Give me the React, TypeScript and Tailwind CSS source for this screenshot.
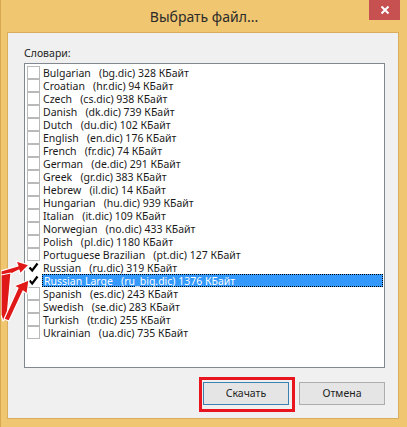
import React from "react";

const items: { name: string; file: string; size: string; checked?: boolean; selected?: boolean }[] = [
  { name: "Bulgarian", file: "bg.dic", size: "328" },
  { name: "Croatian", file: "hr.dic", size: "94" },
  { name: "Czech", file: "cs.dic", size: "938" },
  { name: "Danish", file: "dk.dic", size: "739" },
  { name: "Dutch", file: "du.dic", size: "102" },
  { name: "English", file: "en.dic", size: "176" },
  { name: "French", file: "fr.dic", size: "74" },
  { name: "German", file: "de.dic", size: "291" },
  { name: "Greek", file: "gr.dic", size: "383" },
  { name: "Hebrew", file: "il.dic", size: "14" },
  { name: "Hungarian", file: "hu.dic", size: "939" },
  { name: "Italian", file: "it.dic", size: "109" },
  { name: "Norwegian", file: "no.dic", size: "433" },
  { name: "Polish", file: "pl.dic", size: "1180" },
  { name: "Portuguese Brazilian", file: "pt.dic", size: "127" },
  { name: "Russian", file: "ru.dic", size: "319", checked: true },
  { name: "Russian Large", file: "ru_big.dic", size: "1376", checked: true, selected: true },
  { name: "Spanish", file: "es.dic", size: "243" },
  { name: "Swedish", file: "se.dic", size: "283" },
  { name: "Turkish", file: "tr.dic", size: "255" },
  { name: "Ukrainian", file: "ua.dic", size: "735" },
];

function Check({ checked }: { checked?: boolean }) {
  return (
    <div
      className={`w-[13px] h-[13px] shrink-0 flex items-center justify-center ${
        checked ? "" : "border border-[#b9b9b9] bg-white"
      }`}
    >
      {checked && (
        <svg width="13" height="13" viewBox="0 0 13 13">
          <path d="M2.5 6.5 L5.2 9.5 L10.5 2.5" fill="none" stroke="#000" strokeWidth="2.2" />
        </svg>
      )}
    </div>
  );
}

export default function App() {
  return (
    <div
      className="relative w-[407px] h-[427px] bg-[#f0c670] border-l border-[#d8a850] flex flex-col overflow-hidden"
      style={{ fontFamily: '"Noto Sans", "Open Sans", sans-serif' }}
    >
      <div className="relative h-[32px] shrink-0 flex items-center justify-center">
        <span className="text-[14px] leading-[18px] text-[#2b2b2b] mt-[1px]">Выбрать файл...</span>
        <div className="absolute right-[7px] top-0 w-[31px] h-[20px] bg-[#c75050] flex items-center justify-center">
          <svg width="10" height="10" viewBox="0 0 10 10">
            <path d="M1.5 1.5 L8.5 8.5 M8.5 1.5 L1.5 8.5" stroke="#fff" strokeWidth="2" />
          </svg>
        </div>
      </div>
      <div className="ml-[6px] w-[392px] h-[387px] bg-[#f0f0f0] border border-[#d9ad5e] flex flex-col pl-[16px] pr-[13px]">
        <div className="text-[10.5px] text-[#1e1e1e] leading-[14px] mt-[13px] mb-[3px]">Словари:</div>
        <div className="h-[305px] bg-white border border-[#828790] pt-[2px] pl-[2px] pr-[1px]">
          {items.map((it) => (
            <div key={it.name} className="h-[13px] flex items-center">
              <Check checked={it.checked} />
              <div
                className={`ml-[2px] flex-1 h-[13px] flex items-center pl-[1px] text-[10.5px] leading-[12px] whitespace-pre ${
                  it.selected
                    ? "bg-[#3399ff] text-white border border-dotted border-black"
                    : "text-[#1a1a1a]"
                }`}
              >
                {`${it.name}   (${it.file}) ${it.size} КБайт`}
              </div>
            </div>
          ))}
        </div>
        <div className="flex justify-end gap-[10px] mt-[14px]">
          <div className="border-[3px] border-[#e8141e] pt-[2px] pl-[1px] pr-[3px] pb-[4px] -mt-[5px] -ml-[4px] -mr-[6px] -mb-[7px]">
            <div className="w-[86px] h-[23px] border border-[#3c7fb1] bg-[#e5e5e5] flex items-center justify-center text-[10.5px] text-[#1e1e1e]">
              Скачать
            </div>
          </div>
          <div className="w-[86px] h-[23px] border border-[#adadad] bg-[#e5e5e5] flex items-center justify-center text-[10.5px] text-[#1e1e1e]">
            Отмена
          </div>
        </div>
      </div>
      <svg className="absolute left-0 top-[255px]" width="40" height="75" viewBox="0 0 40 75">
        <g stroke="#fff" strokeWidth="1.2" fill="#e01818" strokeLinejoin="round">
          <path d="M0 16 L17 11 L15 6 L28 10 L19 19 L18 15 L4 22 L0 22 Z" />
          <path d="M0 20 L10 18 L6 62 L2 66 L0 60 Z" />
          <path d="M3 64 L17 33 L13 31 L28 25 L26 39 L22 36 L8 66 Z" />
        </g>
      </svg>
    </div>
  );
}
